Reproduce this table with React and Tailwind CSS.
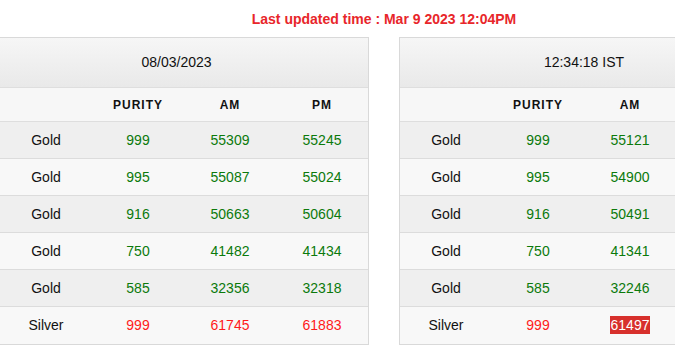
const leftRows = [
  { metal: "Gold", purity: "999", am: "55309", pm: "55245" },
  { metal: "Gold", purity: "995", am: "55087", pm: "55024" },
  { metal: "Gold", purity: "916", am: "50663", pm: "50604" },
  { metal: "Gold", purity: "750", am: "41482", pm: "41434" },
  { metal: "Gold", purity: "585", am: "32356", pm: "32318" },
  { metal: "Silver", purity: "999", am: "61745", pm: "61883", silver: true },
];

const rightRows = [
  { metal: "Gold", purity: "999", am: "55121", pm: "55070" },
  { metal: "Gold", purity: "995", am: "54900", pm: "54850" },
  { metal: "Gold", purity: "916", am: "50491", pm: "50446" },
  { metal: "Gold", purity: "750", am: "41341", pm: "41304" },
  { metal: "Gold", purity: "585", am: "32246", pm: "32217" },
  { metal: "Silver", purity: "999", am: "61497", pm: "61650", silver: true, flash: true },
];

function RateTable({ title, rows, titleClass }) {
  return (
    <div className="w-[370px] shrink-0 border border-[#d9d9d9] text-[14px]">
      {/* Header */}
      <div
        className={`h-[50px] flex items-center justify-center bg-gradient-to-b from-[#f6f6f6] to-[#e9e9e9] border-b border-[#dedede] text-[#111] ${titleClass}`}
      >
        {title}
      </div>

      {/* Column names */}
      <div className="grid grid-cols-4 h-[34px] items-center bg-[#f7f7f7] border-b border-[#dedede] text-[12px] font-bold tracking-[1px] text-[#111] text-center">
        <div></div>
        <div>PURITY</div>
        <div>AM</div>
        <div>PM</div>
      </div>

      {rows.map((r, i) => {
        const color = r.silver ? "text-[#ff1a1a]" : "text-[#0b7a0b]";
        return (
          <div
            key={i}
            className={`grid grid-cols-4 h-[37px] items-center text-center ${
              i % 2 === 0 ? "bg-[#efefef]" : "bg-[#f8f8f8]"
            } ${i < rows.length - 1 ? "border-b border-[#dcdcdc]" : ""}`}
          >
            <div className="text-[#111]">{r.metal}</div>
            <div className={color}>{r.purity}</div>
            <div className={color}>
              {r.flash ? (
                <span className="bg-[#d7302c] text-white px-[1px] py-[1px]">{r.am}</span>
              ) : (
                r.am
              )}
            </div>
            <div className={color}>{r.pm}</div>
          </div>
        );
      })}
    </div>
  );
}

export default function App() {
  return (
    <div
      className="w-[675px] h-[347px] overflow-hidden bg-white"
      style={{ fontFamily: '"Liberation Sans", Arial, sans-serif' }}
    >
      <div className="w-[770px] ml-[-1px]">
        <div className="h-[37px] pt-[1px] flex items-center justify-center text-[14px] font-bold text-[#e8262a]">
          Last updated time : Mar 9 2023 12:04PM
        </div>
        <div className="flex gap-[30px]">
          <RateTable title="08/03/2023" rows={leftRows} titleClass="pr-[15px]" />
          <RateTable title="12:34:18 IST" rows={rightRows} titleClass="" />
        </div>
      </div>
    </div>
  );
}
